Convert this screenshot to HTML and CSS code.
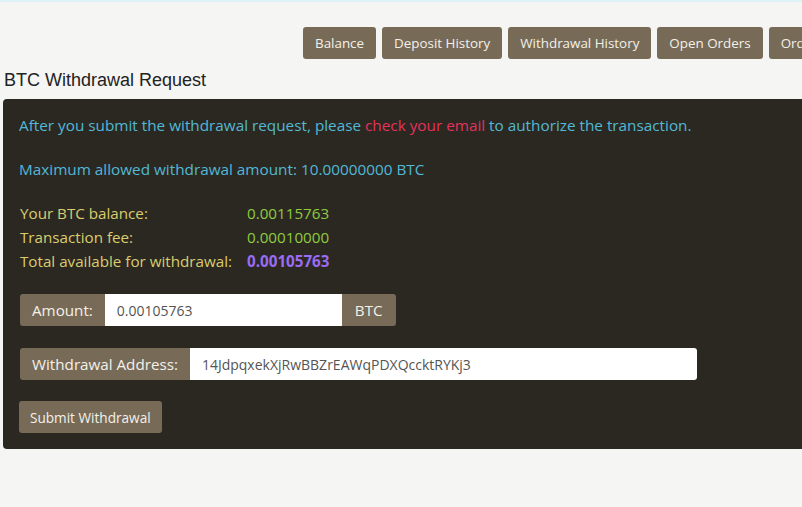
FILE: index.html
```html
<!DOCTYPE html>
<html lang="en">
<head>
  <meta charset="UTF-8" />
  <title>BTC Withdrawal Request</title>
  <link rel="stylesheet" href="styles.css">
</head>
<body>
  <div class="topline"></div>

  <!-- account tabs -->
  <div class="tabs">
    <a class="tab" href="#">Balance</a>
    <a class="tab" href="#">Deposit History</a>
    <a class="tab" href="#">Withdrawal History</a>
    <a class="tab" href="#">Open Orders</a>
    <a class="tab" href="#">Order History</a>
  </div>

  <h2 class="page-title">BTC Withdrawal Request</h2>

  <div class="panel">
    <p class="note">After you submit the withdrawal request, please <span class="warn">check your email</span> to authorize the transaction.</p>
    <p class="note">Maximum allowed withdrawal amount: 10.00000000 BTC</p>

    <table class="summary">
      <tr><td class="lbl">Your BTC balance:</td><td class="val">0.00115763</td></tr>
      <tr><td class="lbl">Transaction fee:</td><td class="val">0.00010000</td></tr>
      <tr><td class="lbl">Total available for withdrawal:</td><td class="val total">0.00105763</td></tr>
    </table>

    <div class="field">
      <span class="addon">Amount:</span>
      <input class="amount" type="text" value="0.00105763">
      <span class="addon unit">BTC</span>
    </div>

    <div class="field">
      <span class="addon">Withdrawal Address:</span>
      <input class="address" type="text" value="14JdpqxekXjRwBBZrEAWqPDXQccktRYKj3">
    </div>

    <button class="submit-btn">Submit Withdrawal</button>
  </div>
</body>
</html>
```

FILE: styles.css
```css
/* page */
body {
  margin: 0;
  padding: 0;
  background-color: #f5f5f4;
  font-family: 'Open Sans', 'Noto Sans', sans-serif;
  overflow: hidden;
}

.topline {
  height: 2px;
  background-color: #dcf4f8;
}

/* tabs */
.tabs {
  display: flex;
  gap: 6px;
  margin-top: 25px;
  padding-left: 303px;
  white-space: nowrap;
}
.tab {
  flex: none;
  display: block;
  height: 32px;
  line-height: 32px;
  padding: 0 12px;
  font-size: 13.4px;
  color: #f4f0e8;
  text-decoration: none;
  background-color: #776b58;
  border-radius: 3px;
}

.page-title {
  margin: 10px 0 0 4px;
  font-family: 'Liberation Sans', Arial, sans-serif;
  font-size: 18px;
  font-weight: normal;
  color: #222;
  line-height: 22px;
}

/* dark panel */
.panel {
  margin: 8px 0 0 3px;
  padding: 16px 16px 16px 16px;
  height: 318px;
  background-color: #2b2822;
  border-radius: 4px 0 0 4px;
}

.note {
  margin: 0 0 24px 0;
  font-size: 15.3px;
  line-height: 20px;
  color: #52b8d6;
}
.warn {
  color: #e5315b;
}

.summary {
  border-collapse: collapse;
  margin: -2px 0 21px 1px;
  font-size: 15.2px;
}
.summary td {
  padding: 0;
  height: 24px;
}
.summary .lbl {
  width: 227px;
  color: #d9cd6e;
}
.summary .val {
  color: #8fcb3f;
}
.summary .total {
  color: #9a6cf5;
  font-weight: bold;
}

/* input groups */
.field {
  display: flex;
  height: 32px;
  margin: 0 0 22px 1px;
}
.addon {
  display: block;
  padding: 0 12px;
  line-height: 32px;
  font-size: 15.2px;
  color: #f4f0e8;
  background-color: #776b58;
  border-radius: 3px 0 0 3px;
}
.addon.unit {
  padding: 0 13px;
  border-radius: 0 3px 3px 0;
}
.field input {
  border: none;
  margin: 0;
  padding: 0 12px;
  height: 32px;
  font-family: inherit;
  font-size: 14px;
  color: #555;
  background-color: #fff;
  outline: none;
}
.amount {
  width: 213px;
}
.address {
  width: 483px;
  border-radius: 0 3px 3px 0;
}

.submit-btn {
  display: block;
  height: 32px;
  margin-top: -1px;
  padding: 0 11px;
  border: none;
  border-radius: 3px;
  font-family: inherit;
  font-size: 13.6px;
  color: #f4f0e8;
  background-color: #776b58;
}
```
